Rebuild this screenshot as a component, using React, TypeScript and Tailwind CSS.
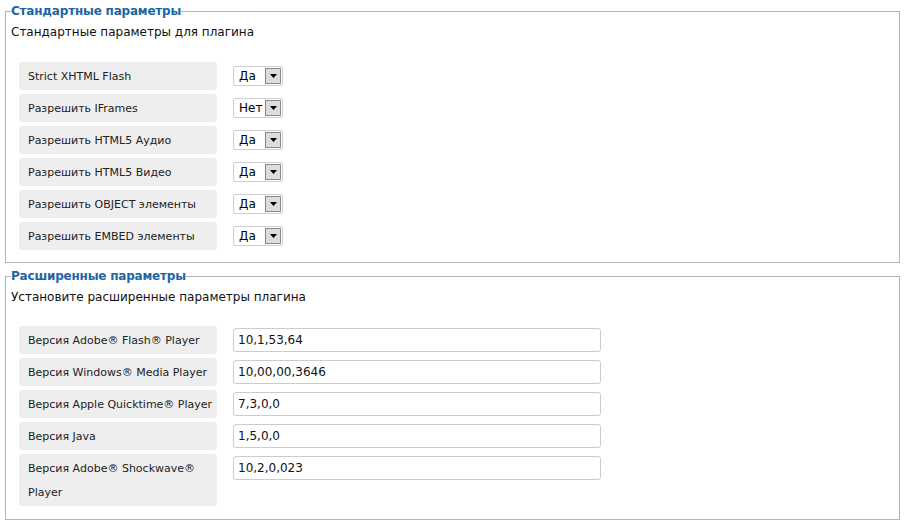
import React from 'react';

type SelectRow = { label: string; value: string };
type InputRow = { label: string; value: string };

const standardRows: SelectRow[] = [
  { label: 'Strict XHTML Flash', value: 'Да' },
  { label: 'Разрешить IFrames', value: 'Нет' },
  { label: 'Разрешить HTML5 Аудио', value: 'Да' },
  { label: 'Разрешить HTML5 Видео', value: 'Да' },
  { label: 'Разрешить OBJECT элементы', value: 'Да' },
  { label: 'Разрешить EMBED элементы', value: 'Да' },
];

const advancedRows: InputRow[] = [
  { label: 'Версия Adobe® Flash® Player', value: '10,1,53,64' },
  { label: 'Версия Windows® Media Player', value: '10,00,00,3646' },
  { label: 'Версия Apple Quicktime® Player', value: '7,3,0,0' },
  { label: 'Версия Java', value: '1,5,0,0' },
  { label: 'Версия Adobe® Shockwave® Player', value: '10,2,0,023' },
];

function Label({ children }: { children: React.ReactNode }) {
  return (
    <div className="w-[198px] shrink-0 rounded-[3px] bg-[#eeeeee] pl-[9px] pr-[4px] pt-[3px] pb-[1px] text-[11px] leading-[24px] text-[#222]">
      {children}
    </div>
  );
}

// Fake old-style select box with a small arrow button
function FakeSelect({ value }: { value: string }) {
  return (
    <div className="mt-[4px] flex h-[20px] w-[50px] items-center justify-between rounded-[2px] border border-[#cfcfcf] bg-white pl-[5px] pr-[1px]">
      <span className="text-[12px] leading-none text-black">{value}</span>
      <span className="flex h-[16px] w-[16px] items-center justify-center border border-[#8a8a8a] bg-[#dcdcdc]">
        <svg width="7" height="4" viewBox="0 0 7 4">
          <path d="M0 0h7L3.5 4z" fill="#000" />
        </svg>
      </span>
    </div>
  );
}

function Section({
  title,
  description,
  children,
  className = '',
}: {
  title: string;
  description: string;
  children: React.ReactNode;
  className?: string;
}) {
  return (
    <fieldset className={`border border-[#b4b4b4] px-[5px] ${className}`}>
      <legend className="text-[12px] font-bold leading-[16px] tracking-[-0.2px] text-[#1d65a6]">{title}</legend>
      <p className="mt-[5px] text-[12px] leading-[16px] text-[#111]">{description}</p>
      <div className="ml-[8px] flex flex-col gap-[4px]">{children}</div>
    </fieldset>
  );
}

export default function App() {
  return (
    <div
      className="min-h-[526px] w-[911px] bg-white pl-[5px] pr-[11px] pt-[3px]"
      style={{ fontFamily: '"DejaVu Sans", Verdana, sans-serif' }}
    >
      <Section
        title="Стандартные параметры"
        description="Стандартные параметры для плагина"
        className="pb-[12px] [&>div]:mt-[22px]"
      >
        {standardRows.map((row) => (
          <div key={row.label} className="flex items-start gap-[16px]">
            <Label>{row.label}</Label>
            <FakeSelect value={row.value} />
          </div>
        ))}
      </Section>

      <Section
        title="Расширенные параметры"
        description="Установите расширенные параметры плагина"
        className="mt-[5px] pb-[13px] [&>div]:mt-[21px]"
      >
        {advancedRows.map((row) => (
          <div key={row.label} className="flex items-start gap-[16px]">
            <Label>{row.label}</Label>
            <input
              readOnly
              value={row.value}
              className="mt-[2px] h-[24px] w-[368px] rounded-[3px] border border-[#cccccc] bg-white px-[4px] text-[12px] text-[#111] outline-none"
            />
          </div>
        ))}
      </Section>
    </div>
  );
}
